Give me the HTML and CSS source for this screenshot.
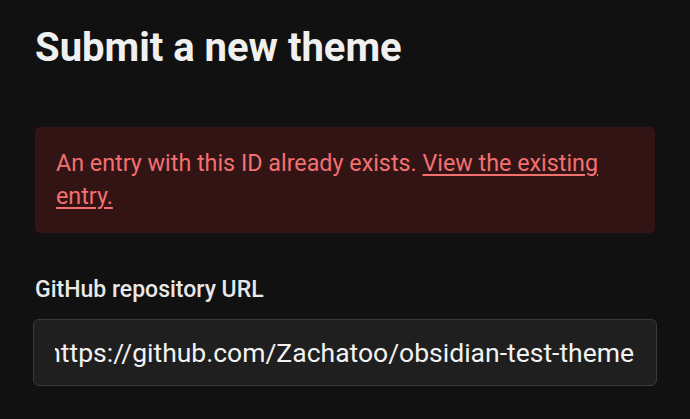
FILE: index.html
```html
<!DOCTYPE html>
<html>
<head>
<meta charset="utf-8">
<link rel="stylesheet" href="styles.css">
</head>
<body>
<main class="page">
  <h1 class="title">Submit a new theme</h1>
  <div class="alert">An entry with this ID already exists. <a href="#" class="alert-link">View the existing entry.</a></div>
  <label class="label">GitHub repository URL</label>
  <div class="input"><div class="input-clip"><span class="input-text">https://github.com/Zachatoo/obsidian-test-theme</span></div></div>
</main>
</body>
</html>
```
FILE: styles.css
```css
html, body {
  margin: 0;
  padding: 0;
  background: #111111;
  height: 100%;
  overflow: hidden;
}
body {
  font-family: Roboto, "Noto Sans", sans-serif;
}
.page {
  padding: 24px 35px 0 35px;
  display: flex;
  flex-direction: column;
}
.title {
  margin: 0;
  font-size: 40px;
  font-weight: 700;
  color: #f0f0f0;
  line-height: 48px;
}
.alert {
  margin-top: 55px;
  background: #321415;
  border-radius: 5px;
  padding: 20px 20px 20px 21px;
  color: #f47070;
  font-size: 23.3px;
  line-height: 33px;
}
.alert-link {
  color: #f47070;
  text-decoration: underline;
  text-underline-offset: 3px;
}
.label {
  margin-top: 41px;
  font-size: 23px;
  font-weight: 500;
  color: #e8e8e8;
  line-height: 32px;
}
.input {
  margin: 13px -2px 0 -2px;
  height: 65px;
  background: #1f1f1f;
  border: 1px solid #3a3a3a;
  border-radius: 6px;
  display: flex;
  align-items: center;
  padding: 0 22px 0 21px;
}
.input-clip {
  flex: 1;
  min-width: 0;
  overflow: hidden;
  display: flex;
  justify-content: flex-end;
}
.input-text {
  white-space: nowrap;
  flex-shrink: 0;
  font-size: 26.5px;
  line-height: 36px;
  color: #f2f2f2;
}
```
